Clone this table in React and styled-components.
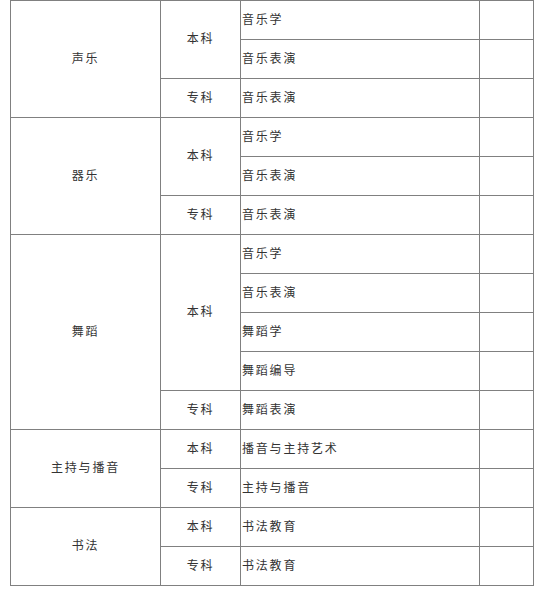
import React from 'react';
import styled, { createGlobalStyle } from 'styled-components';

const GlobalStyle = createGlobalStyle`
  body {
    margin: 0;
    background: #ffffff;
    font-family: "Noto Sans CJK SC", "Noto Sans", sans-serif;
  }
`;

const Table = styled.table`
  margin-left: 10px;
  border-collapse: collapse;
  table-layout: fixed;
  width: 523px;
  border-top: 1px solid #808080;
  border-left: 1px solid #2a2a2a;
  border-right: 1px solid #2a2a2a;
  border-bottom: 1px solid #2a2a2a;
`;

const Col = styled.col`
  width: ${props => props.$w}px;
`;

const Cell = styled.td`
  border: 1px solid #808080;
  height: 39px;
  padding: 0 1px 3px;
  font-size: 12px;
  line-height: 16px;
  letter-spacing: 1.8px;
  color: #333;
  text-align: ${props => (props.$left ? 'left' : 'center')};
  vertical-align: middle;
  white-space: nowrap;
  box-sizing: border-box;
`;

const groups = [
  {
    name: '声乐',
    levels: [
      { level: '本科', majors: ['音乐学', '音乐表演'] },
      { level: '专科', majors: ['音乐表演'] },
    ],
  },
  {
    name: '器乐',
    levels: [
      { level: '本科', majors: ['音乐学', '音乐表演'] },
      { level: '专科', majors: ['音乐表演'] },
    ],
  },
  {
    name: '舞蹈',
    levels: [
      { level: '本科', majors: ['音乐学', '音乐表演', '舞蹈学', '舞蹈编导'] },
      { level: '专科', majors: ['舞蹈表演'] },
    ],
  },
  {
    name: '主持与播音',
    levels: [
      { level: '本科', majors: ['播音与主持艺术'] },
      { level: '专科', majors: ['主持与播音'] },
    ],
  },
  {
    name: '书法',
    levels: [
      { level: '本科', majors: ['书法教育'] },
      { level: '专科', majors: ['书法教育'] },
    ],
  },
];

export default function App() {
  const rows = [];
  groups.forEach((g, gi) => {
    const total = g.levels.reduce((n, l) => n + l.majors.length, 0);
    g.levels.forEach((l, li) => {
      l.majors.forEach((m, mi) => {
        rows.push(
          <tr key={`${gi}-${li}-${mi}`}>
            {li === 0 && mi === 0 && <Cell rowSpan={total}>{g.name}</Cell>}
            {mi === 0 && <Cell rowSpan={l.majors.length}>{l.level}</Cell>}
            <Cell $left>{m}</Cell>
            <Cell />
          </tr>
        );
      });
    });
  });

  return (
    <>
      <GlobalStyle />
      <Table>
        <colgroup>
          <Col $w={150} />
          <Col $w={80} />
          <Col $w={239} />
          <Col $w={54} />
        </colgroup>
        <tbody>{rows}</tbody>
      </Table>
    </>
  );
}
